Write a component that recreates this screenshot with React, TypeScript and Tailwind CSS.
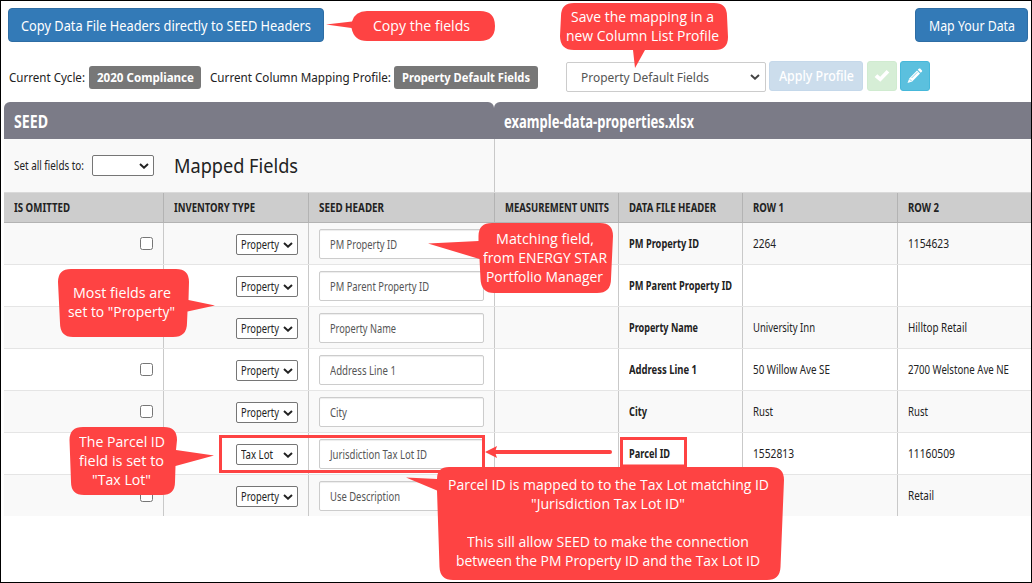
import { useLayoutEffect, useRef, type ReactNode } from 'react';

/** One line of text, condensed or widened to fill the width given by its class. */
function Fit({ w, className = '', children }: { w: string; className?: string; children: ReactNode }) {
  const box = useRef<HTMLSpanElement>(null);
  const text = useRef<HTMLSpanElement>(null);
  useLayoutEffect(() => {
    if (!box.current || !text.current) return;
    text.current.style.transform = 'none';
    const natural = text.current.getBoundingClientRect().width;
    const target = box.current.getBoundingClientRect().width;
    if (natural > 0) text.current.style.transform = `scaleX(${target / natural})`;
  });
  return (
    <span ref={box} className={`flex shrink-0 ${w} ${className}`}>
      <span ref={text} className="block shrink-0 origin-left whitespace-nowrap">
        {children}
      </span>
    </span>
  );
}

function Chevron({ className = 'text-[#222]' }: { className?: string }) {
  return (
    <svg className={`h-[6px] w-[10px] shrink-0 ${className}`} viewBox="0 0 10 6" fill="none">
      <path d="M1 1.1 L5 4.7 L9 1.1" stroke="currentColor" strokeWidth="2" />
    </svg>
  );
}

function SmallSelect({ children }: { children?: ReactNode }) {
  return (
    <div className="flex h-[21px] w-[62px] shrink-0 items-center justify-between rounded-[2px] border border-[#767676] bg-white pr-[4px] pl-[4px] text-[13px] text-[#222]">
      {children ?? <span />}
      <Chevron />
    </div>
  );
}

type Row = {
  check: boolean;
  type: 'Property' | 'Tax Lot';
  field: [string, string];
  header: [string, string];
  one: [string, string];
  two: [string, string];
};

const rows: Row[] = [
  { check: true, type: 'Property', field: ['PM Property ID', 'w-[67px]'], header: ['PM Property ID', 'w-[70px]'], one: ['2264', 'w-[23px]'], two: ['1154623', 'w-[41px]'] },
  { check: false, type: 'Property', field: ['PM Parent Property ID', 'w-[99px]'], header: ['PM Parent Property ID', 'w-[103px]'], one: ['', 'w-0'], two: ['', 'w-0'] },
  { check: false, type: 'Property', field: ['Property Name', 'w-[66px]'], header: ['Property Name', 'w-[69px]'], one: ['University Inn', 'w-[62px]'], two: ['Hilltop Retail', 'w-[59px]'] },
  { check: true, type: 'Property', field: ['Address Line 1', 'w-[66px]'], header: ['Address Line 1', 'w-[68px]'], one: ['50 Willow Ave SE', 'w-[77px]'], two: ['2700 Welstone Ave NE', 'w-[101px]'] },
  { check: true, type: 'Property', field: ['City', 'w-[17px]'], header: ['City', 'w-[18px]'], one: ['Rust', 'w-[20px]'], two: ['Rust', 'w-[20px]'] },
  { check: false, type: 'Tax Lot', field: ['Jurisdiction Tax Lot ID', 'w-[97px]'], header: ['Parcel ID', 'w-[41px]'], one: ['1552813', 'w-[41px]'], two: ['11160509', 'w-[47px]'] },
  { check: true, type: 'Property', field: ['Use Description', 'w-[70px]'], header: ['', 'w-0'], one: ['', 'w-0'], two: ['Retail', 'w-[26px]'] },
];

const columns: [string, string][] = [
  ['IS OMITTED', 'w-[56px]'],
  ['INVENTORY TYPE', 'w-[81px]'],
  ['SEED HEADER', 'w-[65px]'],
  ['MEASUREMENT UNITS', 'w-[104px]'],
  ['DATA FILE HEADER', 'w-[87px]'],
  ['ROW 1', 'w-[31px]'],
  ['ROW 2', 'w-[31px]'],
];

function Cell({ last = false, className = '', children }: { last?: boolean; className?: string; children?: ReactNode }) {
  return (
    <div className={`flex items-center px-[10px] ${last ? '' : 'border-r border-[#c9c9c9]'} ${className}`}>{children}</div>
  );
}

function TopBar() {
  return (
    <div className="flex h-[34px] justify-between">
      <button className="flex w-[316px] items-center rounded-[4px] border border-[#2e6da4] bg-[#337ab7] pl-[12px] text-[15px] text-white">
        <Fit w="w-[290px]">Copy Data File Headers directly to SEED Headers</Fit>
      </button>
      <button className="flex w-[113px] items-center rounded-[4px] border border-[#2e6da4] bg-[#337ab7] pl-[13px] text-[15px] text-white">
        <Fit w="w-[86px]">Map Your Data</Fit>
      </button>
    </div>
  );
}

function ProfileBar() {
  return (
    <div className="flex h-[31px] pl-[1px] text-[13px] text-[#222]">
      <div className="mt-[5px] flex h-[23px] items-center">
        <Fit w="w-[76px]">Current Cycle:</Fit>
        <div className="ml-[4px] flex h-[23px] w-[112px] items-center rounded-[3px] bg-[#777] pl-[8px] font-bold text-white">
          <Fit w="w-[97px]">2020 Compliance</Fit>
        </div>
        <Fit w="w-[181px]" className="ml-[9px]">Current Column Mapping Profile:</Fit>
        <div className="ml-[3px] flex h-[23px] w-[144px] items-center rounded-[3px] bg-[#777] pl-[8px] font-bold text-white">
          <Fit w="w-[128px]">Property Default Fields</Fit>
        </div>
      </div>
      <div className="mt-[1px] ml-[28px] flex h-[30px] w-[200px] items-center justify-between rounded-[2px] border border-[#ccc] bg-white pr-[5px] pl-[14px] text-[#555]">
        <Fit w="w-[128px]">Property Default Fields</Fit>
        <Chevron className="text-[#444]" />
      </div>
      <button className="ml-[3px] flex h-[30px] w-[94px] items-center rounded-[3px] border border-[#c5d8ea] bg-[#ccddec] pl-[9px] text-[14px] font-medium text-white">
        <Fit w="w-[75px]">Apply Profile</Fit>
      </button>
      <button className="ml-[4px] flex h-[30px] w-[30px] items-center justify-center rounded-[3px] border border-[#d0ebd0] bg-[#d6eed6] text-white">
        <svg className="h-[14px] w-[16px]" viewBox="0 0 16 14">
          <path d="M0.600 8 L3.300 5.200 L6.200 7.700 L12.600 1 L15.300 3.600 L6.300 12.800 Z" fill="currentColor" />
        </svg>
      </button>
      <button className="ml-[3px] flex h-[30px] w-[30px] items-center justify-center rounded-[3px] border border-[#46b8da] bg-[#5bc0de] text-white">
        <svg className="h-[16px] w-[16px]" viewBox="0 0 16 16">
          <path d="M0.500 15 L2.200 10.400 L10 2.600 L13 5.600 L5.200 13.400 Z M10.800 1.800 L12 0.600 Q12.600 0.200 13.200 0.600 L15 2.400 Q15.400 3 15 3.600 L13.800 4.800 Z" fill="currentColor" />
          <path d="M2.700 11.200 L4.500 13 M4.600 10 L10.400 4.200" stroke="#5bc0de" strokeWidth="0.7" />
        </svg>
      </button>
    </div>
  );
}

function MappingTable() {
  return (
    <div className="ml-[3px] w-[1027px] text-[#222]">
      <div className="flex h-[37px] text-[17px] font-bold text-white">
        <div className="flex w-[490px] items-center rounded-t-[6px] bg-[#7b7b87] pt-[2px] pl-[10px]">
          <Fit w="w-[34px]">SEED</Fit>
        </div>
        <div className="flex flex-1 items-center rounded-tl-[6px] bg-[#7b7b87] pt-[2px] pl-[10px]">
          <Fit w="w-[190px]">example-data-properties.xlsx</Fit>
        </div>
      </div>
      <div className="flex h-[53px] bg-[#f9f9f9]">
        <div className="flex w-[491px] items-center border-r border-[#c9c9c9] pl-[10px]">
          <Fit w="w-[70px]" className="pt-[2px] text-[12.5px]">Set all fields to:</Fit>
          <div className="ml-[8px]">
            <SmallSelect />
          </div>
          <Fit w="w-[124px]" className="ml-[20px] pt-[1px] text-[19.5px]">Mapped Fields</Fit>
        </div>
      </div>
      <div className="grid h-[31px] grid-cols-[160px_145px_186px_124px_124px_155px_133px] border-t border-b border-t-[#dadada] border-b-[#b3b3b3] bg-[#cdcdcd] text-[12px] font-bold">
        {columns.map(([label, w], i) => (
          <div key={label} className={`flex items-center px-[10px] pt-[1px] ${i < 6 ? 'border-r border-[#b3b3b3]' : ''}`}>
            <Fit w={w}>{label}</Fit>
          </div>
        ))}
      </div>
      {rows.map((r, i) => (
        <div
          key={i}
          className={`grid grid-cols-[160px_145px_186px_124px_124px_155px_133px] text-[12.5px] ${i % 2 ? 'bg-white' : 'bg-[#f9f9f9]'} ${i < 6 ? 'h-[42px] border-b border-[#e5e5e5]' : 'h-[41px]'}`}
        >
          <Cell className="justify-end">
            {r.check && <span className="block h-[13px] w-[13px] rounded-[2.5px] border border-[#767676] bg-white" />}
          </Cell>
          <Cell className="justify-end pt-[2px]">
            <SmallSelect>{r.type === 'Property' ? <Fit w="w-[38px]">Property</Fit> : <Fit w="w-[32px]">Tax Lot</Fit>}</SmallSelect>
          </Cell>
          <Cell>
            <div className="mt-px flex h-[30px] w-[165px] items-center rounded-[2px] border border-[#ccc] bg-white pt-[2px] pl-[10px] text-[#555] shadow-[inset_0_1px_1px_rgba(0,0,0,0.075)]">
              <Fit w={r.field[1]}>{r.field[0]}</Fit>
            </div>
          </Cell>
          <Cell />
          <Cell className="pt-[2px] font-bold">
            <Fit w={r.header[1]}>{r.header[0]}</Fit>
          </Cell>
          <Cell className="pt-[2px]">
            <Fit w={r.one[1]}>{r.one[0]}</Fit>
          </Cell>
          <Cell last className="pt-[2px]">
            <Fit w={r.two[1]}>{r.two[0]}</Fit>
          </Cell>
        </div>
      ))}
    </div>
  );
}

const notes: { box: string; lines: [string, string][] }[] = [
  { box: 'left-[351px] top-[16px] w-[141px]', lines: [['Copy the fields', 'w-[97px]']] },
  { box: 'left-[560px] top-[7px] w-[165px]', lines: [['Save the mapping in a', 'w-[143px]'], ['new Column List Profile', 'w-[153px]']] },
  { box: 'left-[479px] top-[229px] w-[131px]', lines: [['Matching field,', 'w-[98px]'], ['from ENERGY STAR', 'w-[124px]'], ['Portfolio Manager', 'w-[117px]']] },
  { box: 'left-[58px] top-[283px] w-[127px]', lines: [['Most fields are', 'w-[98px]'], ['set to "Property"', 'w-[107px]']] },
  { box: 'left-[69px] top-[432px] w-[105px]', lines: [['The Parcel ID', 'w-[86px]'], ['field is set to', 'w-[85px]'], ['"Tax Lot"', 'w-[59px]']] },
  {
    box: 'left-[437px] top-[475px] w-[342px]',
    lines: [
      ['Parcel ID is mapped to to the Tax Lot matching ID', 'w-[321px]'],
      ['"Jurisdiction Tax Lot ID"', 'w-[154px]'],
      ['', 'w-0'],
      ['This sill allow SEED to make the connection', 'w-[282px]'],
      ['between the PM Property ID and the Tax Lot ID', 'w-[304px]'],
    ],
  },
];

function Annotations() {
  return (
    <>
      <svg className="absolute top-0 left-0 h-[583px] w-[1032px]" viewBox="0 0 1032 583" fill="#fe4343">
        <path d="M326 24.5 L352 21.5 Q355 11 367 11 H480 Q495 11 495 26 Q495 41 480 41 H367 Q354 41 351.5 28 Z" />
        <path d="M574 3 H714 Q727 3 727 16 L728 37 Q728 50 715 50 H645 L635 68 L633 50 H574 Q560 50 560 36 L561 16 Q561 3 574 3 Z" />
        <path d="M428 243.5 L478.500 241 L478.500 236 Q478.500 223 492 223 H600 Q613 223 613 236 L611 279 Q611 293 597 293 H494 Q481 293 480.500 279 L479.500 259 Z" />
        <path d="M71 269 H176 Q189 269 189 282 L188.500 300 L215 305.500 L187.500 311.500 L187 323 Q187 337 173 337 H73 Q60 337 60 323 L58 282 Q58 269 71 269 Z" />
        <path d="M83 427 H164 Q177 427 177 440 L176 450 L214 455.500 L175.500 466 L175 482 Q175 495 162 495 H84 Q71 495 71 482 L69.500 440 Q69.500 427 83 427 Z" />
        <path d="M406 477.500 L437 479 Q437 467 449 467 H771 Q784 467 784 480 L780.500 567 Q780 580 767 580 H453 Q440 580 439.500 567 L437 490.500 Z" />
        <path d="M220.500 436.500 H483.500 V471.500 H220.500 Z" fill="none" stroke="#fe4343" strokeWidth="3" />
        <path d="M621.500 438.500 H685.500 V466 H621.500 Z" fill="none" stroke="#fe4343" strokeWidth="3" />
        <path d="M492 452 H610" stroke="#fe4343" strokeWidth="4" strokeLinecap="round" />
        <path d="M485 452 L497 446 L495 452 L497 458 Z" />
      </svg>
      {notes.map((n) => (
        <div key={n.box} className={`absolute flex flex-col items-center font-['Open_Sans','Noto_Sans',sans-serif] text-[14px] leading-[19px] text-white ${n.box}`}>
          {n.lines.map(([t, w], i) => (
            <Fit key={i} w={w} className="h-[19px]">
              {t}
            </Fit>
          ))}
        </div>
      ))}
    </>
  );
}

export default function App() {
  return (
    <div className="relative h-[583px] w-[1032px] overflow-hidden border border-black bg-white font-['Noto_Sans','Open_Sans',sans-serif] leading-none">
      <div className="flex flex-col pt-[7px]">
        <div className="pr-[3px] pl-[7px]">
          <TopBar />
        </div>
        <div className="mt-[19px] pl-[7px]">
          <ProfileBar />
        </div>
        <div className="mt-[10px]">
          <MappingTable />
        </div>
      </div>
      <div className="absolute -top-px -left-px">
        <Annotations />
      </div>
    </div>
  );
}
